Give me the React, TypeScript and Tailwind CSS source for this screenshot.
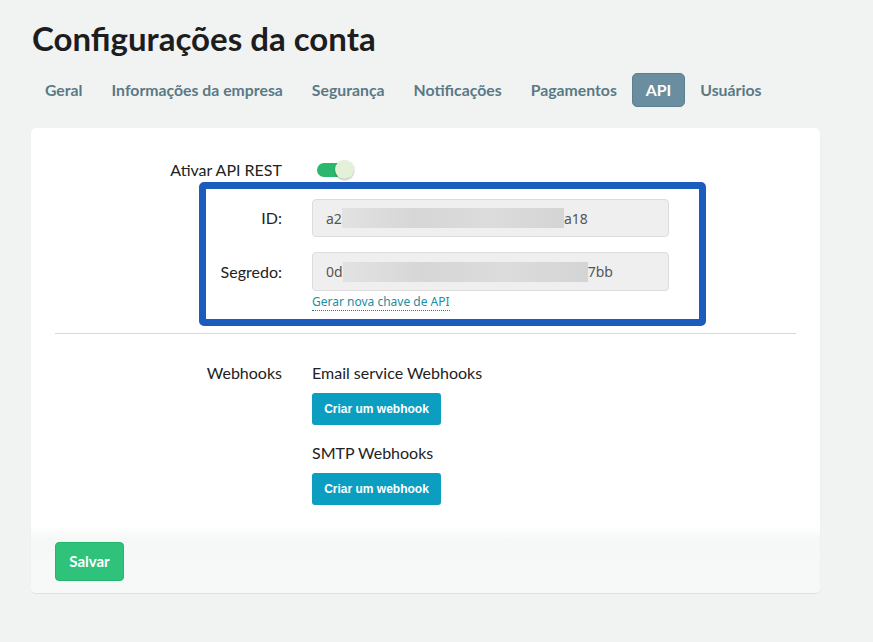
import React from "react";

const tabs = ["Geral", "Informações da empresa", "Segurança", "Notificações", "Pagamentos", "API", "Usuários"];

export default function App() {
  return (
    <div className="min-h-[642px] w-full bg-[#f1f3f3] text-[#222]" style={{ fontFamily: "Lato, 'Noto Sans', sans-serif" }}>
      <div className="pl-[31px] pr-[53px] pt-[17px]">
        <h1 className="pl-px text-[33px] font-bold leading-[42px] text-[#1d1d1d]">Configurações da conta</h1>
        <div className="mt-[14px] flex items-center gap-[1px]">
          {tabs.map((t) => (
            <div
              key={t}
              className={
                t === "API"
                  ? "flex h-[34px] items-center rounded-[5px] border border-[#5d8091] bg-[#6a8e9f] px-[13px] text-[15.8px] font-bold text-white"
                  : "flex h-[34px] items-center px-[14px] text-[15.8px] font-bold text-[#5a7985]"
              }
            >
              {t}
            </div>
          ))}
        </div>
        <div className="mt-[21px] overflow-hidden rounded-[5px] bg-white shadow-[0_1px_1px_rgba(0,0,0,0.08)]">
          <div className="px-[24px] pt-[31px]">
            <div className="flex h-[22px] items-center">
              <div className="w-[227px] text-right text-[16px]">Ativar API REST</div>
              <div className="ml-[35px] relative h-[14px] w-[32px] rounded-full bg-[#2bb86c]">
                <div className="absolute -right-[5px] -top-[3px] h-[19px] w-[19px] rounded-full bg-[#e3f1d9] shadow-[0_1px_2px_rgba(0,0,0,0.3)]" />
              </div>
            </div>
            <div className="ml-[144px] mt-[1px] w-[507px] rounded-[5px] border-[7px] border-[#1c5cbd] pb-[8px] pl-0 pr-[30px] pt-[10px]">
              <div className="flex items-center">
                <div className="w-[76px] text-right text-[16px]">ID:</div>
                <div className="ml-[30px] flex h-[38px] flex-1 items-center rounded-[4px] border border-[#dcdcdc] bg-[#efefef] pl-[13px] text-[#555]" style={{ fontFamily: "'Noto Sans', sans-serif", fontSize: 14 }}>
                  <span>a2</span>
                  <span className="h-[20px] w-[222px] bg-[linear-gradient(90deg,#e2e2e2,#d6d6d6,#dcdcdc,#d4d4d4)]" />
                  <span>a18</span>
                </div>
              </div>
              <div className="mt-[15px] flex items-center">
                <div className="w-[76px] text-right text-[16px]">Segredo:</div>
                <div className="ml-[30px] flex h-[39px] flex-1 items-center rounded-[4px] border border-[#dcdcdc] bg-[#efefef] pl-[13px] text-[#555]" style={{ fontFamily: "'Noto Sans', sans-serif", fontSize: 14 }}>
                  <span>0d</span>
                  <span className="h-[20px] w-[245px] bg-[linear-gradient(90deg,#e2e2e2,#d6d6d6,#dcdcdc,#d4d4d4)]" />
                  <span>7bb</span>
                </div>
              </div>
              <div className="ml-[106px] mt-[3px] h-[17px] text-[12px] leading-[16px]" style={{ fontFamily: "'Noto Sans', sans-serif" }}>
                <span className="border-b border-dotted border-[#1a8099] text-[#1a8ea6]">Gerar nova chave de API</span>
              </div>
            </div>
            <div className="mt-[7px] border-t border-[#d6d9da]" />
            <div className="mt-[28px] flex items-start">
              <div className="w-[227px] text-right text-[16px] leading-[22px]">Webhooks</div>
              <div className="ml-[30px] flex flex-col items-start">
                <div className="text-[16px] leading-[22px]">Email service Webhooks</div>
                <button className="mt-[9px] h-[32px] w-[129px] rounded-[3px] bg-[#0b9ec1] text-[12px] font-bold text-white" style={{ fontFamily: "'Liberation Sans', Arial, sans-serif" }}>Criar um webhook</button>
                <div className="mt-[17px] text-[16px] leading-[22px]">SMTP Webhooks</div>
                <button className="mt-[9px] h-[32px] w-[129px] rounded-[3px] bg-[#0b9ec1] text-[12px] font-bold text-white" style={{ fontFamily: "'Liberation Sans', Arial, sans-serif" }}>Criar um webhook</button>
              </div>
            </div>
          </div>
          <div className="mt-[21px] bg-[linear-gradient(180deg,#ffffff_0px,#f6f7f7_14px,#f7f8f8_100%)] px-[24px] pb-[12px] pt-[16px]">
            <button className="h-[39px] w-[69px] rounded-[4px] border border-[#26b56d] bg-[#2fc27a] text-[15px] font-bold text-white">Salvar</button>
          </div>
        </div>
      </div>
    </div>
  );
}
